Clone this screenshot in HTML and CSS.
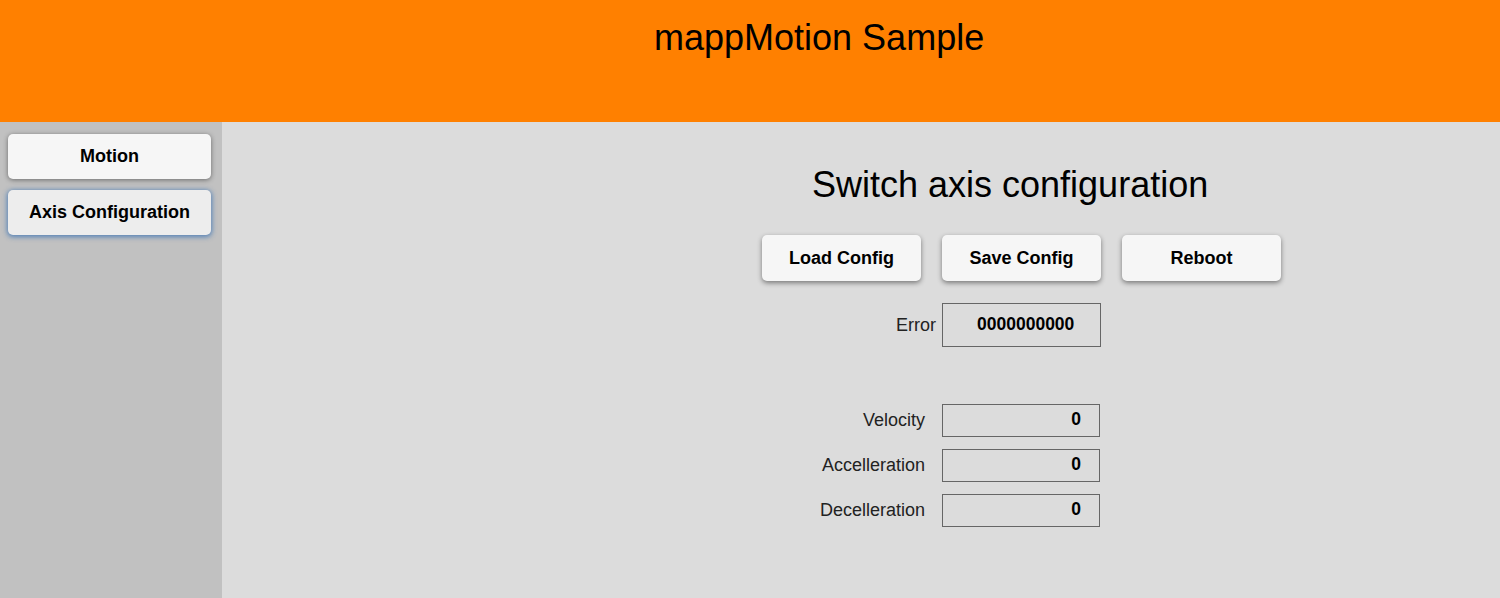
FILE: index.html
```html
<!DOCTYPE html>
<html>
<head>
<meta charset="utf-8">
<link rel="stylesheet" href="styles.css">
</head>
<body>
<header class="topbar">
  <h1 class="app-title">mappMotion Sample</h1>
</header>
<div class="layout">
  <nav class="sidebar">
    <button class="nav-btn">Motion</button>
    <button class="nav-btn active">Axis Configuration</button>
  </nav>
  <main class="content">
    <div class="panel">
      <h2 class="panel-title">Switch axis configuration</h2>
      <div class="actions">
        <button class="action-btn">Load Config</button>
        <button class="action-btn">Save Config</button>
        <button class="action-btn">Reboot</button>
      </div>
      <div class="error-row">
        <span class="error-label">Error</span>
        <div class="error-box">0000000000</div>
      </div>
      <div class="params">
        <div class="param-row">
          <span class="param-label">Velocity</span>
          <div class="param-box">0</div>
        </div>
        <div class="param-row">
          <span class="param-label">Accelleration</span>
          <div class="param-box">0</div>
        </div>
        <div class="param-row">
          <span class="param-label">Decelleration</span>
          <div class="param-box">0</div>
        </div>
      </div>
    </div>
  </main>
</div>
</body>
</html>
```
FILE: styles.css
```css
* { box-sizing: border-box; }
html, body {
  margin: 0;
  padding: 0;
  height: 100%;
  font-family: "Liberation Sans", Arial, sans-serif;
  color: #000;
}
body {
  display: flex;
  flex-direction: column;
  overflow: hidden;
}
.topbar {
  height: 122px;
  background: #ff8000;
  flex: none;
  padding-left: 654px;
}
.app-title {
  margin: 0;
  padding-top: 18px;
  font-size: 36px;
  font-weight: normal;
  line-height: 40px;
}
.layout {
  flex: 1;
  display: flex;
}
.sidebar {
  width: 222px;
  flex: none;
  background: #c1c1c1;
  padding: 12px 11px 0 8px;
  display: flex;
  flex-direction: column;
  gap: 11px;
}
.nav-btn {
  height: 45px;
  width: 203px;
  border: none;
  border-radius: 5px;
  background: #f6f6f6;
  font-family: "Liberation Sans", Arial, sans-serif;
  font-size: 18px;
  font-weight: bold;
  color: #000;
  box-shadow: 0 1px 5px rgba(0,0,0,0.45);
  padding: 0;
}
.nav-btn.active {
  background: #ededed;
  box-shadow: 0 1px 5px 1px rgba(50,110,180,0.75);
}
.content {
  flex: 1;
  background: #dcdcdc;
  padding-left: 540px;
}
.panel {
  width: 520px;
}
.panel-title {
  margin: 43px 0 0 50px;
  font-size: 36px;
  font-weight: normal;
  line-height: 40px;
}
.actions {
  display: flex;
  gap: 21px;
  margin-top: 30px;
}
.action-btn {
  width: 159px;
  height: 46px;
  border: none;
  border-radius: 5px;
  background: #f6f6f6;
  font-family: "Liberation Sans", Arial, sans-serif;
  font-size: 18px;
  font-weight: bold;
  color: #000;
  box-shadow: 0 2px 5px rgba(0,0,0,0.45);
  padding: 0;
}
.error-row {
  display: flex;
  align-items: center;
  margin-top: 22px;
}
.error-label {
  width: 180px;
  text-align: right;
  padding-right: 6px;
  font-size: 18px;
  color: #222;
}
.error-box {
  width: 159px;
  height: 44px;
  border: 1px solid #666;
  font-size: 17.5px;
  font-weight: bold;
  display: flex;
  align-items: center;
  padding-left: 34px;
  padding-bottom: 2px;
}
.params {
  margin-top: 57px;
  display: flex;
  flex-direction: column;
  gap: 12px;
}
.param-row {
  display: flex;
  align-items: center;
}
.param-label {
  width: 180px;
  text-align: right;
  padding-right: 17px;
  font-size: 18px;
  color: #222;
}
.param-box {
  width: 158px;
  height: 33px;
  border: 1px solid #666;
  font-size: 17.5px;
  font-weight: bold;
  display: flex;
  align-items: center;
  justify-content: flex-end;
  padding-right: 18px;
  padding-bottom: 2px;
}
```
